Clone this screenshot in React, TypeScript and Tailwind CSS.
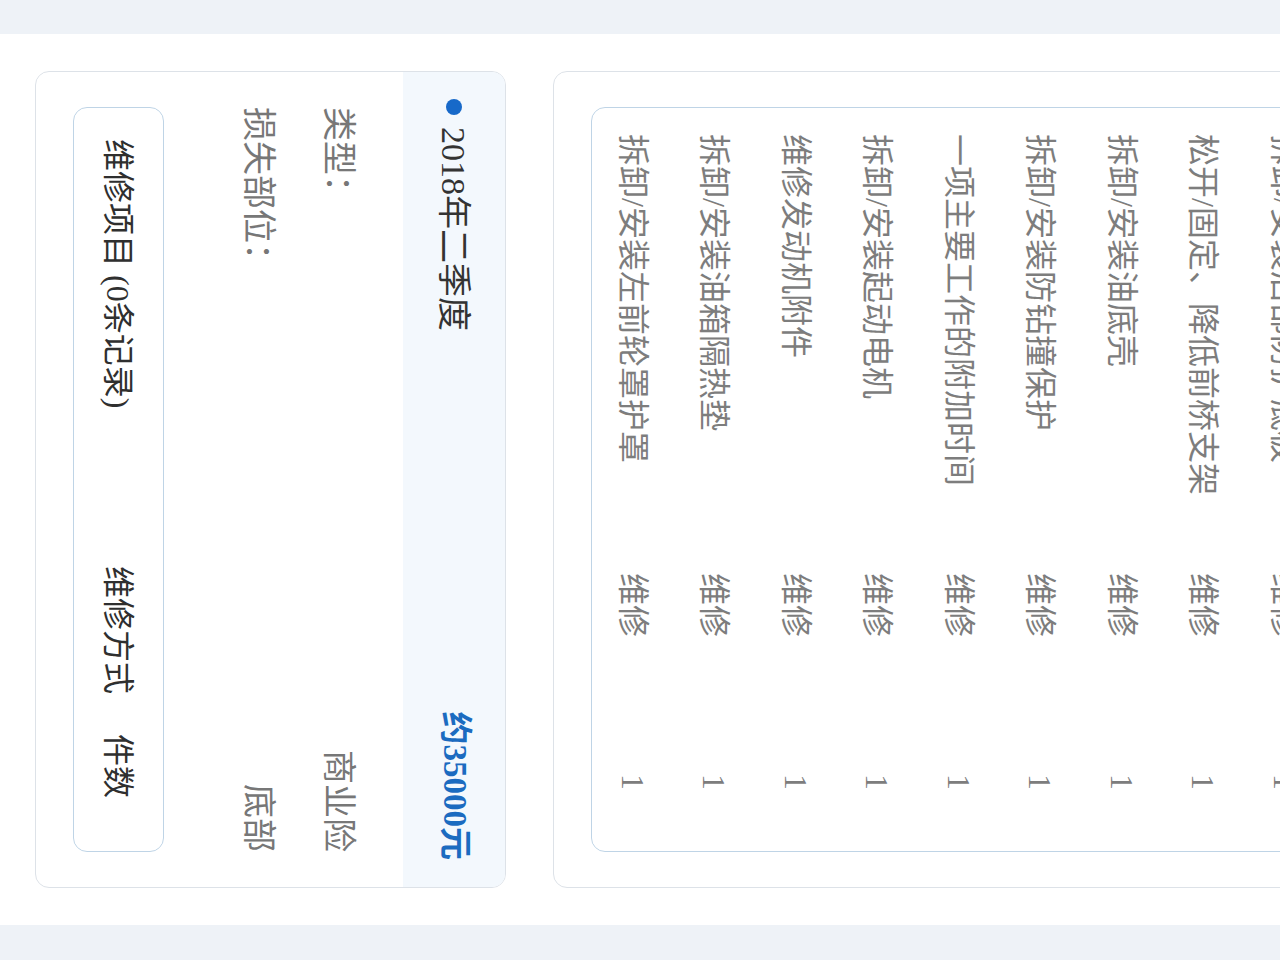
import React from "react";

// 理赔记录 (手机截图, 顺时针旋转 90°)

interface RepairItem {
  name: string;
  method: string;
  count: number;
}

interface ClaimRecord {
  period: string;
  amount: string;
  type: string;
  part: string;
  items: RepairItem[];
}

const FONT = {
  fontFamily: '"Liberation Serif", "Noto Sans CJK SC", serif',
};

const records: ClaimRecord[] = [
  {
    period: "2018年一季度",
    amount: "12000",
    type: "商业险",
    part: "底部",
    items: [
      { name: "拆卸/安装发动机下护板", method: "维修", count: 1 },
      { name: "拆卸/安装前保险杠", method: "维修", count: 1 },
      { name: "拆卸/安装后部防护底板", method: "维修", count: 1 },
      { name: "松开/固定、降低前桥支架", method: "维修", count: 1 },
      { name: "拆卸/安装油底壳", method: "维修", count: 1 },
      { name: "拆卸/安装防钻撞保护", method: "维修", count: 1 },
      { name: "一项主要工作的附加时间", method: "维修", count: 1 },
      { name: "拆卸/安装起动电机", method: "维修", count: 1 },
      { name: "维修发动机附件", method: "维修", count: 1 },
      { name: "拆卸/安装油箱隔热垫", method: "维修", count: 1 },
      { name: "拆卸/安装左前轮罩护罩", method: "维修", count: 1 },
    ],
  },
  {
    period: "2018年二季度",
    amount: "35000",
    type: "商业险",
    part: "底部",
    items: [],
  },
];

function InfoRow({ label, value }: { label: string; value: string }) {
  return (
    <div className="flex h-[80px] items-center justify-between text-[34px] text-[#777]">
      <span>{label}</span>
      <span>{value}</span>
    </div>
  );
}

function RepairTable({ items }: { items: RepairItem[] }) {
  return (
    <div className="mt-[55px] rounded-[14px] border border-[#bfd4e6]">
      {/* 表头 */}
      <div className="grid h-[89px] grid-cols-[427px_168px_1fr] items-center pl-[31px] text-[32px] text-[#2f2f2f]">
        <span>维修项目 ({items.length}条记录)</span>
        <span>维修方式</span>
        <span>件数</span>
      </div>
      {items.map((item, i) => (
        <div
          key={i}
          className="grid h-[81.5px] grid-cols-[439px_201px_1fr] items-center pl-[26px] text-[32px] text-[#7d7d7d]"
        >
          <span className="whitespace-nowrap">{item.name}</span>
          <span>{item.method}</span>
          <span>{item.count}</span>
        </div>
      ))}
    </div>
  );
}

function RecordCard({ record }: { record: ClaimRecord }) {
  return (
    <div className="shrink-0 overflow-hidden rounded-[14px] border border-[#dde2e8] bg-white">
      <div className="flex h-[102px] items-center justify-between bg-[#f3f8fd] px-[27px]">
        <div className="flex items-center gap-[12px]">
          <span className="size-[16px] rounded-full bg-[#1769c9]" />
          <span className="text-[34px] text-[#333]">{record.period}</span>
        </div>
        <span className="text-[33px] font-bold text-[#1b6bc0]">
          约{record.amount}元
        </span>
      </div>
      <div className="px-[35px] pt-[24px] pb-[37px]">
        <InfoRow label="类型：" value={record.type} />
        <InfoRow label="损失部位：" value={record.part} />
        <RepairTable items={record.items} />
      </div>
    </div>
  );
}

export default function App() {
  return (
    <div className="h-[960px] w-[1280px] overflow-hidden bg-[#eef2f7]" style={FONT}>
      <div className="flex h-[1280px] w-[960px] origin-top-left translate-x-[1280px] rotate-90 bg-[#eef2f7] pr-[35px] pl-[34px]">
        <div className="flex h-full flex-1 flex-col justify-end gap-[47px] overflow-hidden bg-white px-[37px] pb-[35px]">
          {records.map((r, i) => (
            <RecordCard key={i} record={r} />
          ))}
        </div>
      </div>
    </div>
  );
}
